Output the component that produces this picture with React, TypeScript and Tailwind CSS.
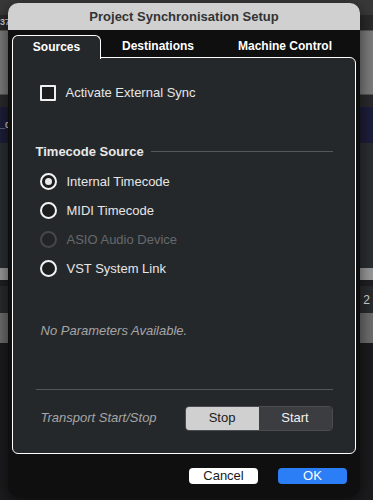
import React from 'react';

const font = { fontFamily: '"Liberation Sans", Arial, sans-serif' };

function Radio({ label, checked, disabled }: { label: string; checked?: boolean; disabled?: boolean }) {
  return (
    <div className="flex h-[29px] items-center">
      <div
        className={
          'flex h-[17px] w-[17px] items-center justify-center rounded-full border-2 ' +
          (disabled ? 'border-[#45484b] bg-[#222427]' : 'border-[#f2f2f2] bg-[#1b1d1f]')
        }
      >
        {checked && <div className="h-[7px] w-[7px] rounded-full bg-[#e8e8e8]" />}
      </div>
      <span className={'ml-[10px] text-[13px] ' + (disabled ? 'text-[#66696c]' : 'text-[#e6e6e6]')}>{label}</span>
    </div>
  );
}

export default function App() {
  return (
    <div className="relative h-[500px] w-[373px] overflow-hidden bg-[#1b1b1d]" style={font}>
      {/* DAW behind the dialog */}
      <div className="flex h-[500px] flex-col">
        <div className="h-[15px] bg-[#393939]" />
        <div className="flex h-[15px] items-center bg-[#2a2a2a] text-[9px] font-bold leading-none text-[#cfcfcf]">
          <span>37</span>
        </div>
        <div className="h-[65px] border-y border-[#555] bg-[#7c7c7c]" />
        <div className="h-[12px] bg-[#2a2a2c]" />
        <div className="flex h-[36px] items-center bg-[#1d1e3a] text-[9px] font-bold leading-none text-[#c8c8d8]">
          <span>_0</span>
        </div>
        <div className="h-[125px] bg-[#2b2e31]" />
        <div className="h-[12px] bg-[#9a9a9a]" />
        <div className="h-[6px] bg-[#202022]" />
        <div className="flex h-[27px] items-center justify-end bg-[#2a2b2d] text-[12px] text-[#ddd]">
          <span className="mr-[3px]">2</span>
        </div>
        <div className="h-[30px] bg-[#6d6d6d]" />
        <div className="flex-1 bg-[#1c1c1e]" />
      </div>

      {/* Dialog */}
      <div className="absolute left-[8px] top-[3px] flex h-[494px] w-[352px] flex-col overflow-hidden rounded-[10px] bg-[#0f0f10] shadow-[0_4px_16px_rgba(0,0,0,0.6)]">
        <div className="flex h-[27px] items-center justify-center bg-[#d0d0d0] text-[13px] font-bold text-[#333333]">
          Project Synchronisation Setup
        </div>

        <div className="flex flex-1 flex-col px-[4px]">
          {/* Tabs */}
          <div className="relative z-10 mt-[5px] flex h-[22px] items-end">
            <div className="-mb-[1.5px] flex h-[23.5px] w-[89px] items-center justify-center rounded-t-[6px] border-x-[1.5px] border-t-[1.5px] border-white bg-[#25282b] text-[12px] font-bold text-white">
              Sources
            </div>
            <div className="flex h-[22px] w-[114px] items-center justify-center text-[12px] font-bold text-white">
              Destinations
            </div>
            <div className="flex h-[22px] w-[140px] items-center justify-center text-[12px] font-bold text-white">
              Machine Control
            </div>
          </div>

          {/* Panel */}
          <div className="flex h-[397px] flex-col rounded-b-[6px] rounded-tr-[6px] border-[1.5px] border-white bg-[#25282b] pl-[22.5px] pr-[22.5px]">
            <div className="ml-[4px] mt-[26.5px] flex h-[16px] items-center">
              <div className="h-[16px] w-[16px] rounded-[1px] border-2 border-[#f0f0f0] bg-[#1b1d1f]" />
              <span className="ml-[10px] text-[13px] text-[#e6e6e6]">Activate External Sync</span>
            </div>

            <div className="mt-[43px] flex h-[16px] items-center">
              <span className="text-[13px] font-bold text-[#e8e8e8]">Timecode Source</span>
              <div className="ml-[7px] h-px flex-1 bg-[#55585b]" />
            </div>

            <div className="ml-[4px] mt-[7.5px] flex flex-col">
              <Radio label="Internal Timecode" checked />
              <Radio label="MIDI Timecode" />
              <Radio label="ASIO Audio Device" disabled />
              <Radio label="VST System Link" />
            </div>

            <div className="ml-[5px] mt-[37.5px] h-[16px] text-[13px] italic text-[#a6a6a6]">
              No Parameters Available.
            </div>

            <div className="mt-[52px] h-px bg-[#55585b]" />

            <div className="mt-[16px] flex h-[25px] items-center justify-between">
              <span className="ml-[5px] text-[13px] italic text-[#a6a6a6]">Transport Start/Stop</span>
              <div className="flex h-[25px] w-[148px] overflow-hidden rounded-[4px] border border-[#4a4c4f]">
                <div className="flex flex-1 items-center justify-center bg-[#d0d0d0] text-[13px] text-[#1a1a1a]">Stop</div>
                <div className="flex flex-1 items-center justify-center bg-[#3c3d40] text-[13px] text-[#f2f2f2]">Start</div>
              </div>
            </div>
          </div>

          {/* Footer */}
          <div className="mr-[9px] mt-[14px] flex justify-end gap-[20px]">
            <button className="flex h-[16px] w-[69px] items-center justify-center rounded-[4px] bg-white text-[13px] text-[#1a1a1a]">
              Cancel
            </button>
            <button className="flex h-[16px] w-[69px] items-center justify-center rounded-[4px] bg-[#2b7ef6] text-[13px] text-white">
              OK
            </button>
          </div>
        </div>
      </div>
    </div>
  );
}
